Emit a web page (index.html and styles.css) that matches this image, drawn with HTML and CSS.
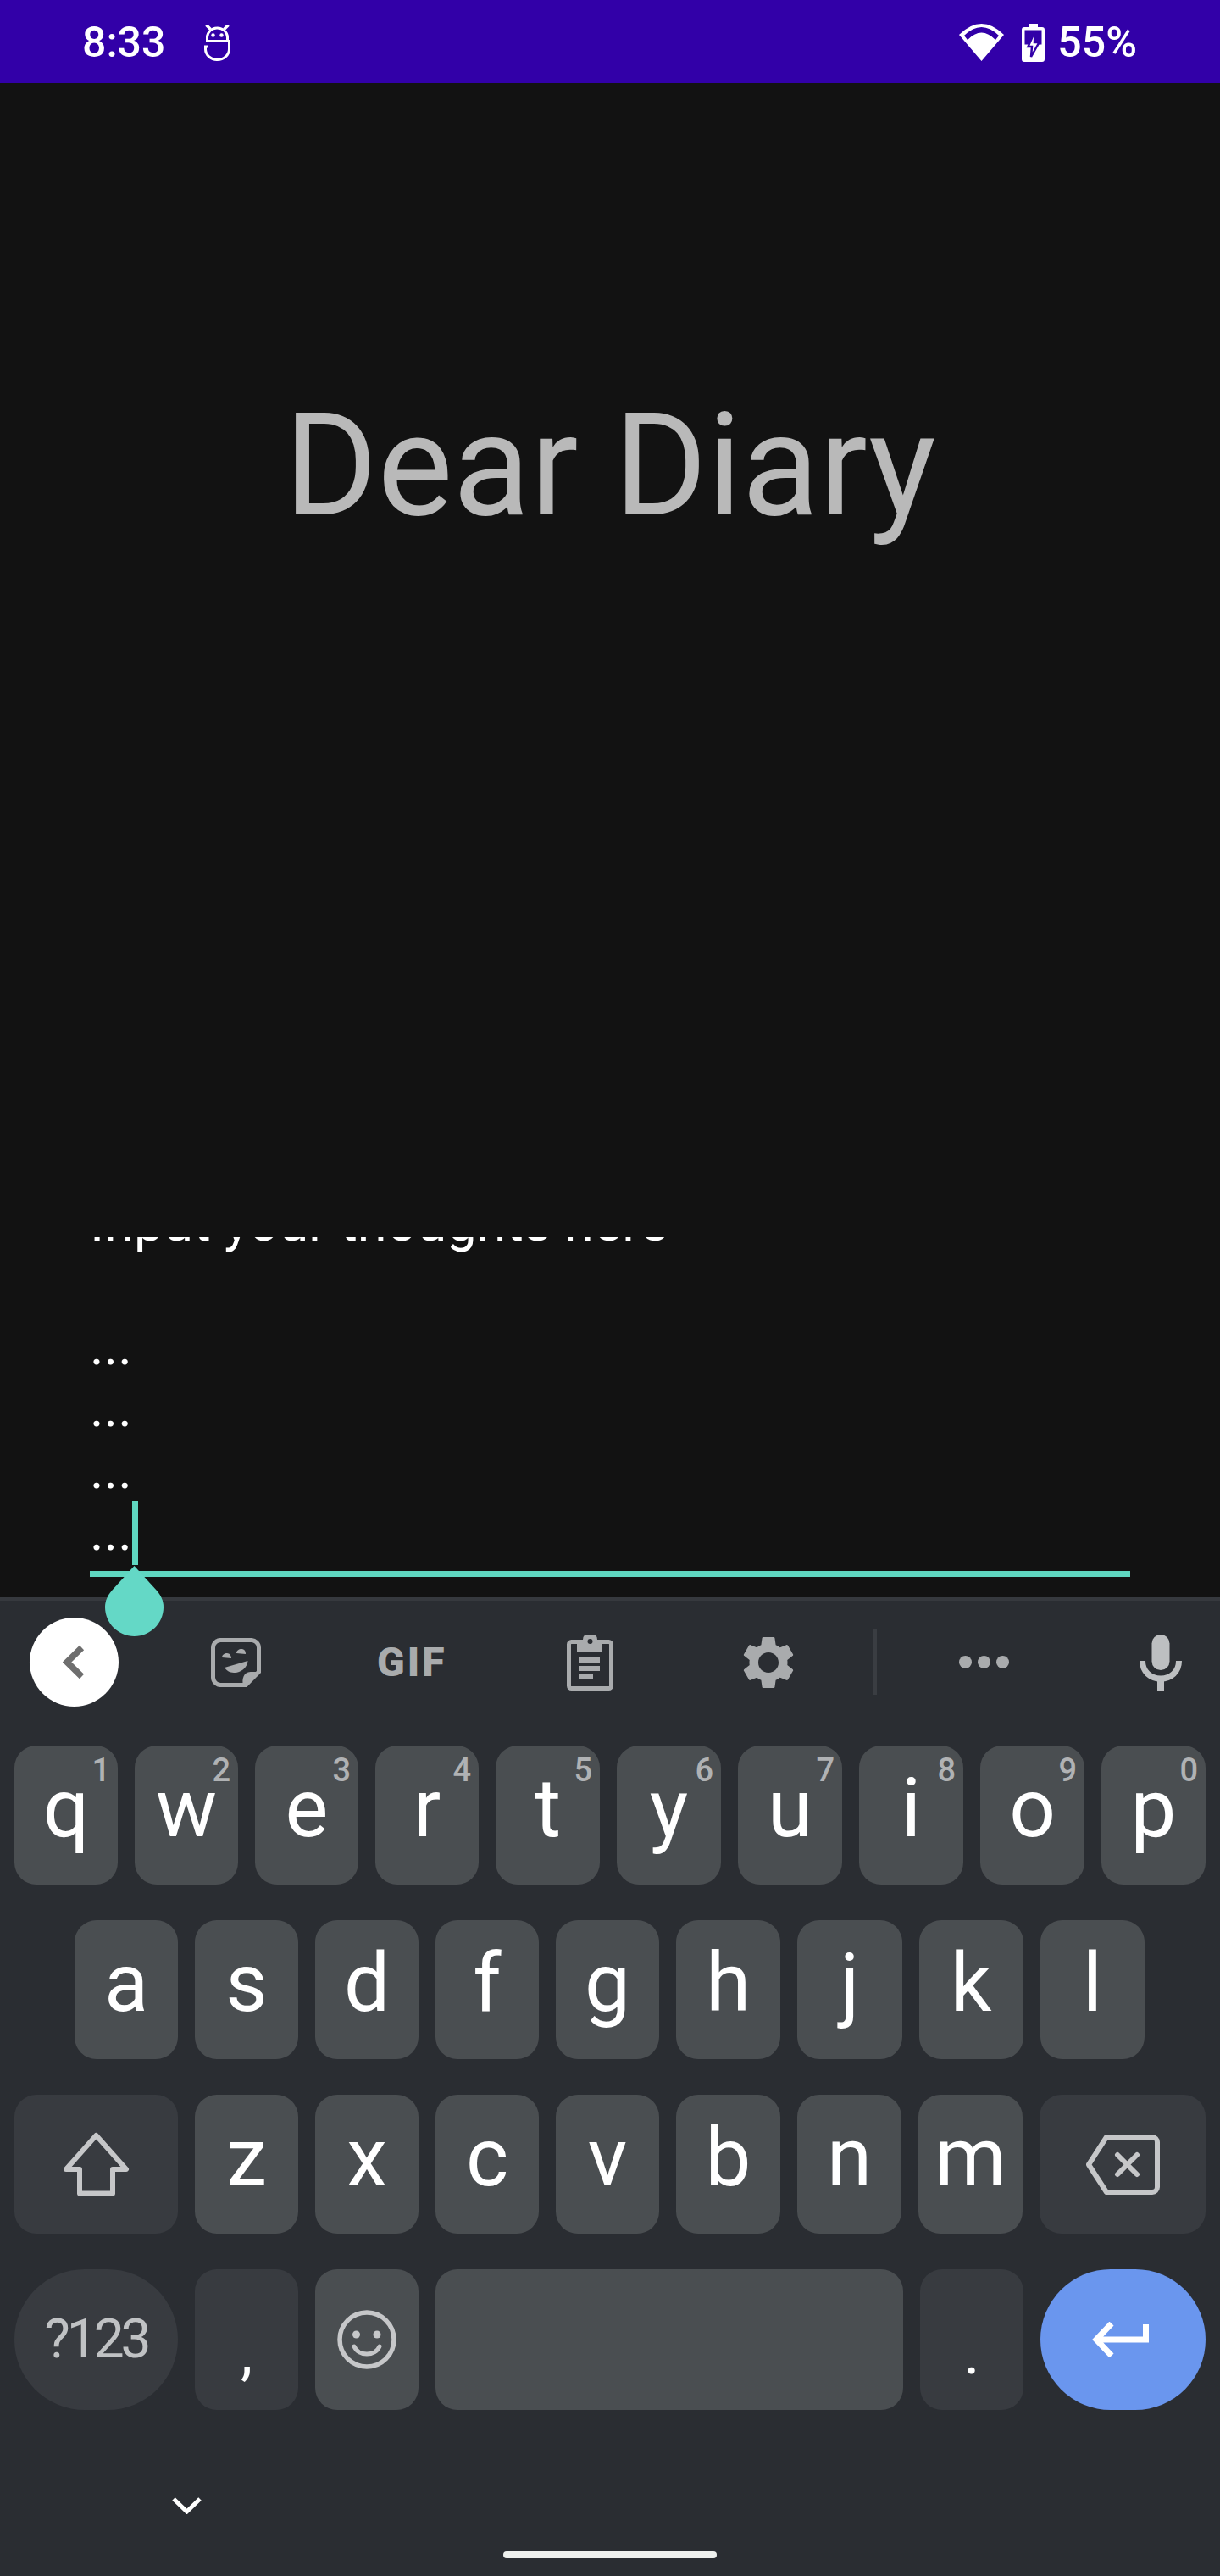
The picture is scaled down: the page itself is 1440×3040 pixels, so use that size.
FILE: index.html
```html
<!DOCTYPE html>
<html lang="en">
<head>
  <meta charset="UTF-8">
  <title>Dear Diary</title>
  <link rel="stylesheet" href="styles.css">
</head>
<body>

  <div class="status-bar">
    <span class="status-text">8:33</span>
    <svg class="status-app" viewBox="0 0 31 43">
      <path d="M27.500 18 V15 C27.500 9 22 4 15.500 4 C9 4 3.500 9 3.500 15 V19.500 H29.500 V29 C29.500 36 23 41.500 15.500 41.500 C8 41.500 1.500 36 1.500 29 V26 H4" fill="none" stroke="#fff" stroke-width="3"/>
      <path d="M2.500 0.500 L7.500 5.500 M28.500 0.500 L23.500 5.500" stroke="#fff" stroke-width="3.500"/>
      <circle cx="10.500" cy="12.500" r="2.200" fill="#fff"/>
      <circle cx="20.500" cy="12.500" r="2.200" fill="#fff"/>
    </svg>
    <div class="status-right">
      <svg class="status-wifi" viewBox="0 0 53 44">
        <path fill="#fff" fill-rule="evenodd" d="M0 13 Q26.500 -13 53 13 L26.500 44 Z M6 14 Q26.500 -6 47 14 L43 19 Q26.500 2 10 19 Z"/>
      </svg>
      <svg class="status-battery" viewBox="0 0 27 45">
        <path fill="#fff" d="M8 0 H19 V4 H24 Q27 4 27 7 V42 Q27 45 24 45 H3 Q0 45 0 42 V7 Q0 4 3 4 H8 Z"/>
        <rect class="cut" x="3.500" y="7.500" width="20" height="17"/>
        <path fill="#fff" class="bolt" d="M15.500 9 L7.500 27 H12 L11 39 L20.500 22 H15 Z"/>
      </svg>
      <span class="status-text">55%</span>
    </div>
  </div>

  <div class="main">
    <h1 class="title">Dear Diary</h1>
    <div class="field">
      <div class="field-text">
        <div class="line">Input your thoughts here</div>
        <div class="line">&nbsp;</div>
        <div class="line">...</div>
        <div class="line">...</div>
        <div class="line">...</div>
        <div class="line">...</div>
      </div>
      <div class="cursor"></div>
      <svg class="handle" viewBox="0 0 69 83">
        <path d="M34.500 0 L8 29 C3 35 0 41 0 48.500 C0 67.500 15.500 83 34.500 83 C53.500 83 69 67.500 69 48.500 C69 41 66 35 61 29 Z"/>
      </svg>
    </div>
  </div>

  <div class="keyboard">
    <div class="toolbar">
      <div class="back-btn">
        <svg viewBox="0 0 26 41"><path d="M22.500 3.500 L5 20.500 L22.500 37.500" fill="none" stroke="#6e6e6e" stroke-width="7.500"/></svg>
      </div>
      <svg class="tb-sticker" viewBox="0 0 59 58">
        <path d="M12 2.500 H47 A9 9 0 0 1 56.500 11.500 V40 L41 55.500 H12 A9 9 0 0 1 2.500 46.500 V11.500 A9 9 0 0 1 12 2.500 Z" fill="none" stroke="#a9abad" stroke-width="5"/>
        <path d="M59 40 L42 58 L38 56 C36 48 39 39 48 40 Z" fill="#a9abad"/>
        <path d="M13 23 C13 20 16 18 19 18 C22 18 24 21 24 24 Z M30 18 C30 15 33 13 36 13 C39 13 41 15 41 19 Z M16 35 L43.500 27 C43 36 33 42 27 41 C22 41 18 38 16 35 Z" fill="#a9abad"/>
      </svg>
      <span class="tb-gif">GIF</span>
      <svg class="tb-clip" viewBox="0 0 55 66">
        <rect x="2.500" y="8.500" width="50" height="55" rx="3" fill="none" stroke="#a9abad" stroke-width="5"/>
        <path d="M12 6 H19 A8.500 8.500 0 0 1 36 6 H42 V21 H12 Z" fill="#a9abad"/>
        <circle cx="27.500" cy="8" r="3" fill="#2a2d32"/>
        <path d="M15 27 H39 V33 H15 Z M15 37 H39 V43 H15 Z M15 47 H31 V53 H15 Z" fill="#a9abad"/>
      </svg>
      <svg class="tb-gear" viewBox="2 2 20 20">
        <path fill="#a9abad" fill-rule="evenodd" d="M19.430 12.980c.04-.32.07-.64.07-.98s-.03-.66-.07-.98l2.110-1.650c.19-.15.24-.42.12-.64l-2-3.460c-.12-.22-.39-.3-.61-.22l-2.490 1c-.52-.4-1.080-.73-1.690-.98l-.38-2.650C14.460 2.180 14.250 2 14 2h-4c-.25 0-.46.18-.49.42l-.38 2.650c-.61.25-1.170.59-1.690.98l-2.490-1c-.23-.09-.49 0-.61.22l-2 3.460c-.13.22-.07.49.12.64l2.110 1.650c-.04.32-.07.65-.07.98s.03.66.07.98l-2.110 1.650c-.19.15-.24.42-.12.64l2 3.460c.12.22.39.3.61.22l2.490-1c.52.4 1.080.73 1.690.98l.38 2.650c.03.24.24.42.49.42h4c.25 0 .46-.18.49-.42l.38-2.650c.61-.25 1.170-.59 1.690-.98l2.490 1c.23.09.49 0 .61-.22l2-3.460c.12-.22.07-.49-.12-.64l-2.110-1.650zM12 16c-2.210 0-4-1.790-4-4s1.790-4 4-4 4 1.790 4 4-1.790 4-4 4z"/>
      </svg>
      <div class="tb-divider"></div>
      <div class="tb-dots"><i></i><i></i><i></i></div>
      <svg class="tb-mic" viewBox="0 0 50 66">
        <rect x="14.500" y="0" width="21" height="42" rx="10.500" fill="#bdbfc1"/>
        <path d="M3.500 31 C3.500 44 13 52 25 52 C37 52 46.500 44 46.500 31" fill="none" stroke="#bdbfc1" stroke-width="7"/>
        <rect x="21" y="50" width="8" height="16" fill="#bdbfc1"/>
      </svg>
    </div>

    <div class="keys">
      <div class="row row-top">
        <div class="key">q<sup>1</sup></div>
        <div class="key">w<sup>2</sup></div>
        <div class="key">e<sup>3</sup></div>
        <div class="key">r<sup>4</sup></div>
        <div class="key">t<sup>5</sup></div>
        <div class="key">y<sup>6</sup></div>
        <div class="key">u<sup>7</sup></div>
        <div class="key">i<sup>8</sup></div>
        <div class="key">o<sup>9</sup></div>
        <div class="key">p<sup>0</sup></div>
      </div>
      <div class="row row-home">
        <div class="key">a</div>
        <div class="key">s</div>
        <div class="key">d</div>
        <div class="key">f</div>
        <div class="key">g</div>
        <div class="key">h</div>
        <div class="key">j</div>
        <div class="key">k</div>
        <div class="key">l</div>
      </div>
      <div class="row row-shift">
        <div class="key dark">
          <svg class="ic-shift" viewBox="0 0 79 76"><path d="M39.500 4 L75 44 H59 V72.500 H20 V44 H4 Z" fill="none" stroke="#c6c7c9" stroke-width="6" stroke-linejoin="round"/></svg>
        </div>
        <div class="key">z</div>
        <div class="key">x</div>
        <div class="key">c</div>
        <div class="key">v</div>
        <div class="key">b</div>
        <div class="key">n</div>
        <div class="key">m</div>
        <div class="key dark">
          <svg class="ic-back" viewBox="0 0 88 71">
            <path d="M25 3 H79 A6 6 0 0 1 85 9 V62 A6 6 0 0 1 79 68 H25 L4 35.500 Z" fill="none" stroke="#c6c7c9" stroke-width="6" stroke-linejoin="round"/>
            <path d="M38 24 L61 47 M61 24 L38 47" stroke="#c6c7c9" stroke-width="6" stroke-linecap="round"/>
          </svg>
        </div>
      </div>
      <div class="row row-bottom">
        <div class="key dark pill sym">?123</div>
        <div class="key dark punct">,</div>
        <div class="key">
          <svg class="ic-emoji" viewBox="0 0 70 70">
            <circle cx="35" cy="35" r="32" fill="none" stroke="#c6c7c9" stroke-width="5.500"/>
            <circle cx="22.500" cy="29" r="4.500" fill="#c6c7c9"/>
            <circle cx="47" cy="29" r="4.500" fill="#c6c7c9"/>
            <path d="M20 43 C25 55 45 55 50 43" fill="none" stroke="#c6c7c9" stroke-width="5" stroke-linecap="round"/>
          </svg>
        </div>
        <div class="key"></div>
        <div class="key dark punct">.</div>
        <div class="key pill enter">
          <svg class="ic-enter" viewBox="0 0 67 42"><path d="M63.500 3 V21 H6 M23 2 L5 21 L23 40" fill="none" stroke="#fff" stroke-width="7"/></svg>
        </div>
      </div>
    </div>

    <div class="nav">
      <svg class="nav-down" viewBox="0 0 35 21"><path d="M2 3 L17.500 18 L33 3" fill="none" stroke="#fff" stroke-width="5"/></svg>
      <div class="nav-pill"></div>
    </div>
  </div>

</body>
</html>
```

FILE: styles.css
```css
* { box-sizing: border-box; }
html, body { margin: 0; padding: 0; }
body { width: 1440px; height: 3040px; display: flex; flex-direction: column; background: #121212; font-family: Roboto, "Liberation Sans", sans-serif; overflow: hidden; }
svg { display: block; flex: none; }

/* status bar */
.status-bar { height: 98px; flex: none; display: flex; align-items: center; padding: 2px 98px 0 97px; background: #3200a8; color: #fff; }
.status-text { font-size: 50px; line-height: 56px; font-weight: 500; }
.status-app { width: 31px; height: 43px; margin-left: 46px; }
.status-right { margin-left: auto; display: flex; align-items: center; }
.status-wifi { width: 53px; height: 44px; }
.status-battery { width: 27px; height: 45px; margin-left: 21px; }
.status-battery .cut { fill: #3200a8; }
.status-battery .bolt { stroke: #3200a8; stroke-width: 2.5; }
.status-right .status-text { margin-left: 15px; }

/* page */
.main { flex: 1; display: flex; flex-direction: column; position: relative; z-index: 1; }
.title { margin: 352px 0 0; font-size: 168px; line-height: 200px; font-weight: 400; color: #b9b9b9; text-align: center; }
.field { margin: auto 106px 24px; height: 401px; border-bottom: 7px solid #5fd6c0; position: relative; }
.field-text { height: 394px; padding-bottom: 10px; display: flex; flex-direction: column; justify-content: flex-end; overflow: hidden; color: #fff; font-size: 63px; line-height: 73px; }
.line { flex: none; height: 73px; }
.cursor { position: absolute; left: 50px; top: 311px; width: 7px; height: 76px; background: #5fd6c0; }
.handle { position: absolute; left: 18px; top: 388px; width: 69px; height: 83px; fill: #64d8c6; }

/* keyboard */
.keyboard { flex: none; height: 1155px; background: #2a2d32; border-top: 4px solid #36393e; }
.toolbar { height: 145px; display: flex; align-items: center; padding-left: 35px; }
.back-btn { width: 105px; height: 105px; border-radius: 50%; background: #fff; display: flex; align-items: center; justify-content: center; }
.back-btn svg { width: 26px; height: 41px; margin-left: -2px; }
.tb-sticker { width: 59px; height: 58px; margin-left: 109px; }
.tb-gif { width: 81px; margin-left: 137px; font-size: 48px; line-height: 48px; font-weight: 900; letter-spacing: 3px; color: #a9abad; }
.tb-clip { width: 55px; height: 66px; margin-left: 143px; }
.tb-gear { width: 60px; height: 60px; margin-left: 153px; }
.tb-divider { width: 4px; height: 77px; margin-left: 94px; background: #3a3d42; }
.tb-dots { display: flex; gap: 7px; margin-left: 97px; }
.tb-dots i { width: 15px; height: 15px; border-radius: 50%; background: #a9abad; }
.tb-mic { width: 50px; height: 66px; margin-left: 154px; }

.keys { padding: 26px 17px 0; display: flex; flex-direction: column; gap: 42px; }
.row { display: grid; gap: 20px; height: 164px; }
.row-top { grid-template-columns: repeat(4, 122px) repeat(6, 1fr); }
.row-home { grid-template-columns: repeat(5, 122px) repeat(4, 1fr); padding: 0 72px 0 71px; }
.row-shift { grid-template-columns: 193px repeat(4, 122px) repeat(3, 123px) 1fr; }
.row-bottom { grid-template-columns: 193px 122px 122px 1fr 122px 195px; height: 166px; }
.key { position: relative; display: flex; align-items: center; justify-content: center; padding-bottom: 17px; background: #4a4e51; border-radius: 26px; color: #fff; font-size: 96px; line-height: 112px; }
.key sup { position: absolute; top: 10px; right: 9px; font-size: 38px; line-height: 38px; font-weight: 500; color: #b0b2b4; }
.key.dark { background: #383b40; }
.key.pill { border-radius: 83px; padding-bottom: 0; }
.key.enter { background: #6a96ee; }
.key.sym { font-size: 64px; line-height: 70px; letter-spacing: -4px; color: #c0c2c4; }
.key.punct { font-size: 72px; line-height: 84px; padding-bottom: 0; padding-top: 32px; }
.ic-shift { width: 79px; height: 76px; margin-top: 17px; }
.ic-back { width: 88px; height: 71px; margin-top: 17px; }
.ic-emoji { width: 70px; height: 70px; margin-top: 17px; }
.ic-enter { width: 67px; height: 42px; margin-left: -6px; }

.nav { padding: 102px 0 0 203px; }
.nav-down { width: 35px; height: 21px; }
.nav-pill { width: 252px; height: 8px; margin: 44px 0 0 391px; border-radius: 4px; background: #eef0ee; }
```
